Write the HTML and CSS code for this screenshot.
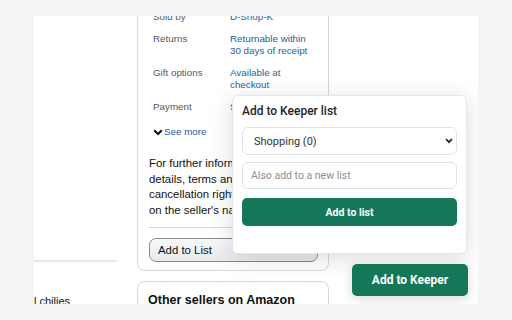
FILE: index.html
```html
<!DOCTYPE html>
<html>
<head>
<meta charset="utf-8">
<link rel="stylesheet" href="styles.css">
</head>
<body>
<div class="shot">
  <div class="page">
    <div class="leftcol">
      <div class="rule"></div>
      <div class="chilies">l chilies</div>
    </div>
    <div class="midcol">
      <div class="buybox">
        <div class="facts">
          <div class="label">Sold by</div><div class="value">D-Shop-K</div>
          <div class="label">Returns</div><div class="value">Returnable within<br>30 days of receipt</div>
          <div class="label">Gift options</div><div class="value">Available at<br>checkout</div>
          <div class="label">Payment</div><div class="value">Secure transaction</div>
        </div>
        <div class="seemore">
          <svg class="chev" width="10" height="7" viewBox="0 0 10 7"><polyline points="1.2,1.2 5,5 8.8,1.2" fill="none" stroke="#0f1111" stroke-width="2"/></svg>
          <span>See more</span>
        </div>
        <p class="legal">For further information on the seller's<br>details, terms and conditions, and<br>cancellation rights, please click<br>on the seller's name.</p>
        <div class="divider"></div>
        <div class="listbtn">Add to List</div>
      </div>
      <div class="sellers">
        <div class="sellers-title">Other sellers on Amazon</div>
      </div>
    </div>
  </div>

  <div class="popup">
    <div class="popup-title">Add to Keeper list</div>
    <div class="select">
      <span>Shopping (0)</span>
      <svg width="8" height="6" viewBox="0 0 8 6"><polyline points="1,1 4,4.2 7,1" fill="none" stroke="#222" stroke-width="1.8"/></svg>
    </div>
    <div class="input">Also add to a new list</div>
    <div class="btn">Add to list</div>
  </div>
  <div class="keeper">Add to Keeper</div>
</div>
</body>
</html>
```
FILE: styles.css
```css
html, body {
  margin: 0;
  padding: 0;
  background: #f4f5f7;
}
.shot {
  position: relative;
  margin: 16px 0 0 34px;
  width: 444px;
  height: 288px;
  background: #fff;
  overflow: hidden;
  font-family: "Liberation Sans", Arial, sans-serif;
  color: #0f1111;
}
.page {
  display: flex;
  margin-top: -20px;
}
.leftcol {
  width: 83px;
  margin-right: 20px;
  padding-top: 264px;
}
.rule {
  height: 2px;
  background: #e7e7e7;
}
.chilies {
  margin-top: 32px;
  font-size: 11px;
  line-height: 14px;
  color: #0f1111;
}
.midcol {
  width: 192px;
}
.buybox {
  border: 1px solid #d5d9d9;
  border-radius: 8px;
  padding: 14px 10px 8px 11px;
}
.facts {
  display: grid;
  grid-template-columns: 77px 1fr;
  row-gap: 10px;
  padding-left: 4px;
  font-size: 9.8px;
  line-height: 12px;
}
.label {
  color: #565959;
}
.value {
  color: #2162a1;
  white-space: nowrap;
}
.seemore {
  display: flex;
  align-items: center;
  gap: 1px;
  margin-top: 13px;
  padding-left: 4px;
  font-size: 9.8px;
  line-height: 12px;
  color: #2162a1;
}
.chev {
  display: block;
}
.legal {
  margin: 18px 0 0;
  font-size: 11.4px;
  line-height: 15.5px;
  white-space: nowrap;
}
.divider {
  margin-top: 9px;
  height: 1px;
  background: #d5d9d9;
}
.listbtn {
  margin-top: 10px;
  height: 22px;
  border: 1px solid #888c8c;
  border-radius: 7px;
  background: linear-gradient(#f7f8fa, #e7e9ec);
  font-size: 11.4px;
  line-height: 22px;
  padding-left: 8px;
}
.sellers {
  margin-top: 10px;
  border: 1px solid #d5d9d9;
  border-radius: 8px;
  padding: 10px 10px 20px;
}
.sellers-title {
  font-weight: bold;
  font-size: 12.5px;
  line-height: 16px;
}
.popup {
  position: absolute;
  left: 198px;
  top: 79px;
  width: 215px;
  height: 150px;
  padding: 7px 9px 0;
  background: #fff;
  border: 1px solid #e3e6ea;
  border-radius: 6px;
  box-shadow: 0 4px 24px rgba(0, 0, 0, 0.14);
  font-family: Roboto, "Noto Sans", sans-serif;
  color: #1f2328;
}
.popup-title {
  font-size: 12px;
  font-weight: 500;
  line-height: 17px;
}
.select {
  margin-top: 7px;
  height: 26px;
  border: 1px solid #dfe3e8;
  border-radius: 6px;
  display: flex;
  align-items: center;
  justify-content: space-between;
  padding: 0 3px 0 11px;
  font-size: 11px;
  color: #333;
}
.input {
  margin-top: 7px;
  height: 25px;
  border: 1px solid #dfe3e8;
  border-radius: 6px;
  display: flex;
  align-items: center;
  padding-left: 8px;
  font-size: 10.5px;
  color: #8a8f96;
}
.btn {
  margin-top: 9px;
  height: 28px;
  border-radius: 5px;
  background: #15775a;
  color: #fff;
  font-size: 10.5px;
  font-weight: 700;
  display: flex;
  align-items: center;
  justify-content: center;
}
.keeper {
  position: absolute;
  left: 318px;
  top: 248px;
  width: 116px;
  height: 32px;
  border-radius: 5px;
  background: #15775a;
  color: #fff;
  font-family: Roboto, "Noto Sans", sans-serif;
  font-size: 12px;
  font-weight: 700;
  display: flex;
  align-items: center;
  justify-content: center;
  box-shadow: 0 3px 12px rgba(0, 0, 0, 0.15);
}
```
